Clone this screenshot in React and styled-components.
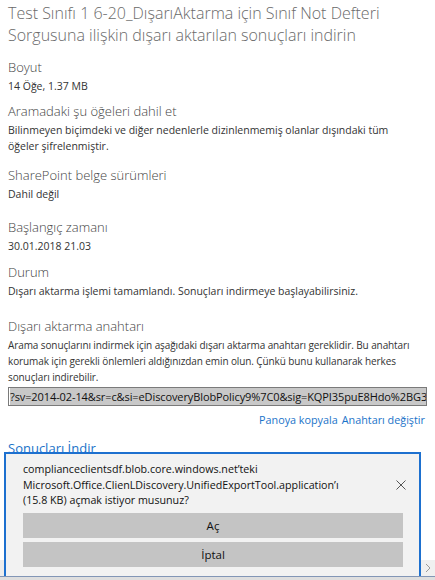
import React from "react";
import styled, { createGlobalStyle } from "styled-components";

const Global = createGlobalStyle`
  html, body { margin: 0; padding: 0; background: #fff; }
  body { font-family: "Open Sans", "Noto Sans", sans-serif; }
`;

const Page = styled.div`
  position: relative;
  width: 435px;
  height: 580px;
  overflow: hidden;
  background: #fff;
`;

const Content = styled.div`
  padding: 2px 8px 0 8px;
  display: flex;
  flex-direction: column;
`;

const Title = styled.h1`
  margin: 0 0 12px 0;
  font-size: 16px;
  font-weight: 300;
  line-height: 22px;
  color: #6a6a6a;
  white-space: nowrap;
`;

const Section = styled.section`
  display: flex;
  flex-direction: column;
  margin-bottom: ${(p) => p.$gap ?? 10}px;
`;

const Label = styled.div`
  font-size: 13px;
  font-weight: 300;
  line-height: 18px;
  color: #444;
  margin-bottom: 2px;
`;

const Value = styled.div`
  font-size: ${(p) => (p.$dense ? 10 : 10.5)}px;
  letter-spacing: ${(p) => (p.$dense ? -0.1 : 0)}px;
  line-height: 16px;
  color: #333;
  white-space: nowrap;
`;

const KeyBox = styled.div`
  margin-top: 2px;
  height: 17px;
  border: 1px solid #7a7a7a;
  overflow: hidden;
  white-space: nowrap;
  display: flex;
  align-items: stretch;
  padding: 0 1px;
`;

const Selected = styled.span`
  background: #c8c8c8;
  color: #111;
  font-size: 11px;
  line-height: 17px;
  letter-spacing: -0.1px;
`;

const LinkRow = styled.div`
  display: flex;
  justify-content: flex-end;
  gap: 4px;
  margin-top: 6px;
  padding-right: 2px;
  line-height: 16px;
`;

const Link = styled.a`
  color: #1a73c9;
  font-size: ${(p) => p.$size || 10.8}px;
  line-height: ${(p) => (p.$size ? 18 : 16)}px;
  text-decoration: none;
  cursor: pointer;
`;

const Download = styled.div`
  margin-top: 11px;
  display: flex;
`;

const Bottom = styled.div`
  position: absolute;
  left: 0;
  right: 0;
  bottom: 0;
  height: 20px;
  display: flex;
  flex-direction: column;
`;

const ScrollBar = styled.div`
  height: 16px;
  background: #ececec;
  display: flex;
  justify-content: flex-end;
`;

const Arrow = styled.div`
  width: 14px;
  display: flex;
  align-items: center;
  justify-content: center;
  background: #f0f0f0;
`;

const Frame = styled.div`
  height: 1px;
  background: #8296b6;
`;

const Status = styled.div`
  flex: 1;
  background: #dedede;
`;

const Prompt = styled.div`
  position: absolute;
  left: 4px;
  top: 452px;
  width: 417px;
  height: 124px;
  box-sizing: border-box;
  background: #f2f2f2;
  border: 2px solid #1d70cf;
  border-bottom: none;
  display: flex;
  flex-direction: column;
  padding: 8px 16px 0 17px;
`;

const PromptTop = styled.div`
  display: flex;
  align-items: center;
  justify-content: space-between;
`;

const PromptText = styled.div`
  font-size: 10.7px;
  line-height: 15.5px;
  color: #111;
  white-space: nowrap;
`;

const Close = styled.button`
  border: 0;
  background: transparent;
  padding: 0;
  width: 12px;
  height: 12px;
  margin-right: -4px;
  display: flex;
  align-items: center;
  justify-content: center;
`;

const Actions = styled.div`
  display: flex;
  flex-direction: column;
  gap: 4px;
  margin-top: 4px;
`;

const ActionButton = styled.button`
  height: 25px;
  border: 0;
  background: #c4c4c4;
  color: #111;
  font-family: "Open Sans", sans-serif;
  font-size: 11.5px;
  padding: 0;
`;

export default function App() {
  return (
    <Page>
      <Global />
      <Content>
        <Title>
          Test Sınıfı 1 6-20_DışarıAktarma için Sınıf Not Defteri
          <br />
          Sorgusuna ilişkin dışarı aktarılan sonuçları indirin
        </Title>
        <Section $gap={8}>
          <Label>Boyut</Label>
          <Value>14 Öğe, 1.37 MB</Value>
        </Section>
        <Section $gap={12}>
          <Label>Aramadaki şu öğeleri dahil et</Label>
          <Value>
            Bilinmeyen biçimdeki ve diğer nedenlerle dizinlenmemiş olanlar dışındaki tüm
            <br />
            öğeler şifrelenmiştir.
          </Value>
        </Section>
        <Section $gap={16}>
          <Label>SharePoint belge sürümleri</Label>
          <Value>Dahil değil</Value>
        </Section>
        <Section $gap={9}>
          <Label>Başlangıç zamanı</Label>
          <Value>30.01.2018 21.03</Value>
        </Section>
        <Section $gap={18}>
          <Label>Durum</Label>
          <Value>Dışarı aktarma işlemi tamamlandı. Sonuçları indirmeye başlayabilirsiniz.</Value>
        </Section>
        <Section $gap={0}>
          <Label>Dışarı aktarma anahtarı</Label>
          <Value $dense>
            Arama sonuçlarını indirmek için aşağıdaki dışarı aktarma anahtarı gereklidir. Bu anahtarı
            <br />
            korumak için gerekli önlemleri aldığınızdan emin olun. Çünkü bunu kullanarak herkes
            <br />
            sonuçları indirebilir.
          </Value>
          <KeyBox>
            <Selected>?sv=2014-02-14&amp;sr=c&amp;si=eDiscoveryBlobPolicy9%7C0&amp;sig=KQPI35puE8Hdo%2BG3dX</Selected>
          </KeyBox>
          <LinkRow>
            <Link>Panoya kopyala</Link>
            <Link>Anahtarı değiştir</Link>
          </LinkRow>
        </Section>
        <Download>
          <Link $size={13}>Sonuçları İndir</Link>
        </Download>
      </Content>

      <Bottom>
        <ScrollBar>
          <Arrow>
            <svg width="6" height="10" viewBox="0 0 6 10">
              <path d="M1 1 L5 5 L1 9" fill="none" stroke="#9a9a9a" strokeWidth="1" />
            </svg>
          </Arrow>
        </ScrollBar>
        <Frame />
        <Status />
      </Bottom>

      <Prompt>
        <PromptTop>
          <PromptText>
            complianceclientsdf.blob.core.windows.net’teki
            <br />
            Microsoft.Office.ClienLDiscovery.UnifiedExportTool.application’ı
            <br />
            (15.8 KB) açmak istiyor musunuz?
          </PromptText>
          <Close aria-label="Kapat">
            <svg width="10" height="10" viewBox="0 0 10 10">
              <path d="M0.5 0.5 L9.5 9.5 M9.5 0.5 L0.5 9.5" stroke="#555" strokeWidth="1" />
            </svg>
          </Close>
        </PromptTop>
        <Actions>
          <ActionButton>Aç</ActionButton>
          <ActionButton>İptal</ActionButton>
        </Actions>
      </Prompt>
    </Page>
  );
}
